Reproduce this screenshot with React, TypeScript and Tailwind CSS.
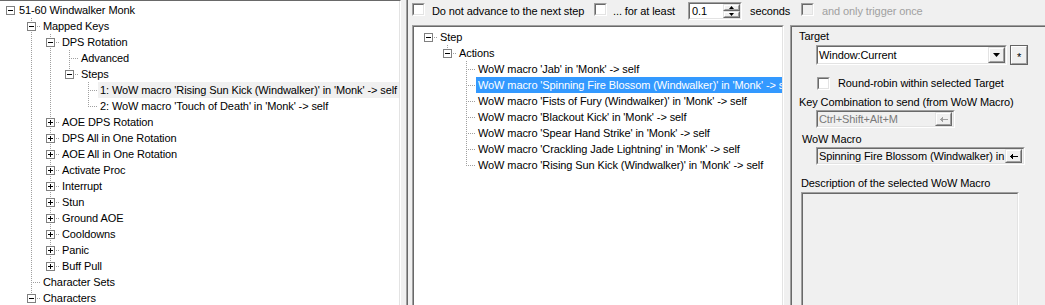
import React from "react";

type Node = { t: string; exp?: "-" | "+"; kids?: Node[]; sel?: boolean };
type Flat = { t: string; level: number; exp?: "-" | "+"; last: boolean; cont: number[]; root: boolean; sel?: boolean };

function flatten(n: Node, level: number, cont: number[], last: boolean, root: boolean, out: Flat[]) {
  out.push({ t: n.t, level, exp: n.exp, last, cont, root, sel: n.sel });
  const kids = n.kids || [];
  const childCont = last ? cont : [...cont, level];
  kids.forEach((k, i) => flatten(k, level + 1, childCont, i === kids.length - 1, false, out));
  return out;
}

const closed = (t: string): Node => ({ t, exp: "+" });

const leftTree: Node = {
  t: "51-60 Windwalker Monk",
  exp: "-",
  kids: [
    {
      t: "Mapped Keys",
      exp: "-",
      kids: [
        {
          t: "DPS Rotation",
          exp: "-",
          kids: [
            { t: "Advanced" },
            {
              t: "Steps",
              exp: "-",
              kids: [
                { t: "1: WoW macro 'Rising Sun Kick (Windwalker)' in 'Monk' -> self", sel: true },
                { t: "2: WoW macro 'Touch of Death' in 'Monk' -> self" },
              ],
            },
          ],
        },
        closed("AOE DPS Rotation"),
        closed("DPS All in One Rotation"),
        closed("AOE All in One Rotation"),
        closed("Activate Proc"),
        closed("Interrupt"),
        closed("Stun"),
        closed("Ground AOE"),
        closed("Cooldowns"),
        closed("Panic"),
        closed("Buff Pull"),
      ],
    },
    { t: "Character Sets" },
    { t: "Characters", exp: "-" },
  ],
};

const stepTree: Node = {
  t: "Step",
  exp: "-",
  kids: [
    {
      t: "Actions",
      exp: "-",
      kids: [
        { t: "WoW macro 'Jab' in 'Monk' -> self" },
        { t: "WoW macro 'Spinning Fire Blossom (Windwalker)' in 'Monk' -> self", sel: true },
        { t: "WoW macro 'Fists of Fury (Windwalker)' in 'Monk' -> self" },
        { t: "WoW macro 'Blackout Kick' in 'Monk' -> self" },
        { t: "WoW macro 'Spear Hand Strike' in 'Monk' -> self" },
        { t: "WoW macro 'Crackling Jade Lightning' in 'Monk' -> self" },
        { t: "WoW macro 'Rising Sun Kick (Windwalker)' in 'Monk' -> self" },
      ],
    },
  ],
};

const leftRows = flatten(leftTree, 0, [], true, true, []);
const stepRows = flatten(stepTree, 0, [], true, true, []);

function TreeRow({
  r,
  xOf,
  tx,
  selClass,
}: {
  r: Flat;
  xOf: (lv: number) => number;
  tx: (lv: number) => number;
  selClass: string;
}) {
  const L = xOf(r.level);
  const T = tx(r.level);
  const dots = { stroke: "#a0a0a0", strokeDasharray: "1 1", shapeRendering: "crispEdges" as const };
  return (
    <div className="flex h-4 items-center whitespace-nowrap">
      <svg width={T - 2} height={16} className="shrink-0">
        {r.cont.map((lv) => (
          <line key={lv} x1={xOf(lv) + 0.5} y1={0} x2={xOf(lv) + 0.5} y2={16} {...dots} />
        ))}
        {!r.root && <line x1={L + 0.5} y1={0} x2={L + 0.5} y2={r.exp ? 4 : 9} {...dots} />}
        {!r.last && <line x1={L + 0.5} y1={r.exp ? 14 : 8} x2={L + 0.5} y2={16} {...dots} />}
        <line x1={r.exp ? L + 6 : L + 2} y1={8.5} x2={T - 3} y2={8.5} {...dots} />
        {r.exp && (
          <g shapeRendering="crispEdges">
            <rect x={L - 3.5} y={4.5} width={8} height={8} fill="#fff" stroke="#808080" />
            <line x1={L - 2} y1={8.5} x2={L + 3} y2={8.5} stroke="#000" />
            {r.exp === "+" && <line x1={L + 0.5} y1={6} x2={L + 0.5} y2={11} stroke="#000" />}
          </g>
        )}
      </svg>
      <span className={`h-4 px-[2px] leading-4 ${r.sel ? selClass : ""}`}>{r.t}</span>
    </div>
  );
}

function Sunken({ className = "", inner = "", children }: { className?: string; inner?: string; children?: React.ReactNode }) {
  return (
    <div className={`border border-t-[#a0a0a0] border-l-[#a0a0a0] border-r-white border-b-white ${className}`}>
      <div className={`h-full w-full border border-t-[#696969] border-l-[#696969] border-r-[#e3e3e3] border-b-[#e3e3e3] ${inner}`}>
        {children}
      </div>
    </div>
  );
}

function Raised({ className = "", children }: { className?: string; children?: React.ReactNode }) {
  return (
    <div className={`border border-t-[#e3e3e3] border-l-[#e3e3e3] border-r-[#696969] border-b-[#696969] ${className}`}>
      <div className="flex h-full w-full items-center justify-center border border-t-white border-l-white border-r-[#a0a0a0] border-b-[#a0a0a0] bg-[#f0f0f0]">
        {children}
      </div>
    </div>
  );
}

function Check({ disabled = false, className = "" }: { disabled?: boolean; className?: string }) {
  return <Sunken className={`h-[13px] w-[13px] shrink-0 ${className}`} inner={disabled ? "bg-[#f0f0f0]" : "bg-white"} />;
}

function BackArrow({ color = "#000" }: { color?: string }) {
  return (
    <svg width={8} height={5} shapeRendering="crispEdges">
      <polygon points="0,2.5 3,0 3,5" fill={color} />
      <line x1={3} y1={2.5} x2={8} y2={2.5} stroke={color} />
    </svg>
  );
}

export default function App() {
  return (
    <div className="flex h-[305px] w-[1045px] overflow-hidden bg-[#f0f0f0] font-['Liberation_Sans',Arial,sans-serif] text-[11px] leading-4 tracking-[-0.1px] text-black">
      {/* Profile tree */}
      <div className="h-full w-[401px] shrink-0 border-t border-r border-t-[#696969] border-r-white bg-white">
        <div className="h-full overflow-hidden border-r border-r-[#e3e3e3] pt-[1px]">
          {leftRows.map((r, i) => (
            <TreeRow
              key={i}
              r={r}
              xOf={(lv) => (lv === 0 ? 10 : 12 + 19 * lv)}
              tx={(lv) => (lv === 0 ? 19 : 24 + 19 * lv)}
              selClass="bg-[#f0f0f0]"
            />
          ))}
        </div>
      </div>

      {/* Splitter */}
      <div className="ml-[5px] h-full w-[2px] shrink-0 border-l border-r border-l-[#a0a0a0] border-r-[#696969]" />

      <div className="flex min-w-0 flex-1 flex-col overflow-hidden pl-[4px]">
        {/* Step options */}
        <div className="flex h-[25px] shrink-0 items-start whitespace-nowrap">
          <Check className="mt-[3px]" />
          <span className="mt-[3px] ml-[7px] w-[155px]">Do not advance to the next step</span>
          <Check className="mt-[3px] ml-[7px]" />
          <span className="mt-[3px] ml-[6px] w-[75px]">... for at least</span>
          <Sunken className="mt-[2px] h-[18px] w-[54px] shrink-0" inner="flex bg-white">
            <span className="flex-1 pl-[2px] leading-[14px]">0.1</span>
            <div className="flex w-[17px] flex-col">
              <Raised className="h-[7px] w-[17px]">
                <svg width={5} height={3}>
                  <polygon points="2.5,0 5,3 0,3" fill="#000" />
                </svg>
              </Raised>
              <Raised className="h-[7px] w-[17px]">
                <svg width={5} height={3}>
                  <polygon points="0,0 5,0 2.5,3" fill="#000" />
                </svg>
              </Raised>
            </div>
          </Sunken>
          <span className="mt-[3px] ml-[8px] w-[51px]">seconds</span>
          <Check disabled className="mt-[3px]" />
          <span className="mt-[3px] ml-[8px] text-[#a0a0a0]">and only trigger once</span>
        </div>

        <div className="flex min-h-0 flex-1">
          {/* Step tree */}
          <Sunken className="h-[290px] w-[372px] shrink-0" inner="overflow-hidden bg-white pt-[2px]">
            {stepRows.map((r, i) => (
              <TreeRow
                key={i}
                r={r}
                xOf={(lv) => 14 + 19 * lv}
                tx={(lv) => 26 + 19 * lv}
                selClass="bg-[#3399ff] text-white"
              />
            ))}
          </Sunken>

          {/* Target / macro details */}
          <Sunken className="ml-[6px] h-[290px] w-[262px] shrink-0" inner="flex flex-col pl-[7px] pt-[1px] whitespace-nowrap">
            <div className="h-4">Target</div>
            <div className="mt-[1px] flex">
              <Sunken className="ml-[17px] h-[20px] w-[191px]" inner="flex bg-white">
                <span className="flex-1 pl-[1px] leading-4">Window:Current</span>
                <Raised className="h-full w-[17px]">
                  <svg width={7} height={4}>
                    <polygon points="0,0 7,0 3.5,4" fill="#000" />
                  </svg>
                </Raised>
              </Sunken>
              <div className="ml-[3px] h-[20px] w-[18px] border border-[#646464]">
                <div className="flex h-full w-full items-center justify-center border border-t-white border-l-white border-r-[#a0a0a0] border-b-[#a0a0a0] pt-[3px]">
                  *
                </div>
              </div>
            </div>
            <div className="mt-[10px] flex h-4 items-center">
              <Check className="ml-[18px]" />
              <span className="ml-[8px]">Round-robin within selected Target</span>
            </div>
            <div className="mt-[3px] h-4">Key Combination to send (from WoW Macro)</div>
            <Sunken className="ml-[17px] h-[18px] w-[139px]" inner="flex items-center bg-[#f0f0f0]">
              <span className="flex-1 pl-[1px] leading-[14px] text-[#7a7a7a]">Ctrl+Shift+Alt+M</span>
              <Raised className="mr-[1px] h-[14px] w-[17px]">
                <BackArrow color="#a0a0a0" />
              </Raised>
            </Sunken>
            <div className="mt-[3px] ml-[3px] h-4">WoW Macro</div>
            <Sunken className="ml-[17px] h-[18px] w-[209px]" inner="flex items-center bg-[#f0f0f0]">
              <span className="flex-1 overflow-hidden pl-[1px] leading-[14px]">Spinning Fire Blossom (Windwalker) in</span>
              <Raised className="mr-[1px] h-[14px] w-[17px] shrink-0">
                <BackArrow />
              </Raised>
            </Sunken>
            <div className="mt-[10px] ml-[2px] h-4">Description of the selected WoW Macro</div>
            <Sunken className="mt-[1px] ml-[2px] h-[150px] w-[218px] shrink-0" inner="bg-[#f0f0f0]" />
          </Sunken>
        </div>
      </div>
    </div>
  );
}
